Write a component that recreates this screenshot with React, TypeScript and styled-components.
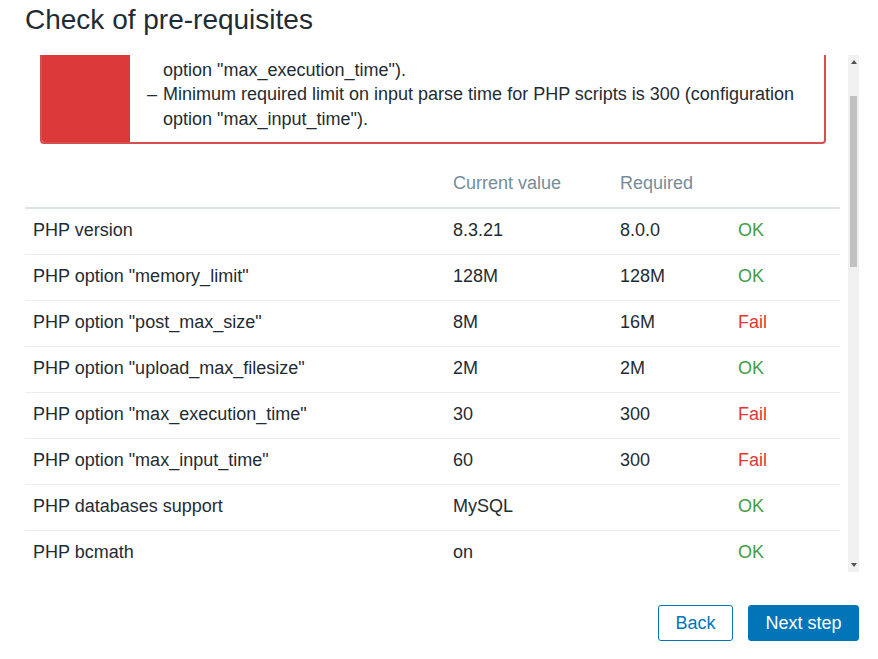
import React, { useEffect, useRef, useState } from "react";
import styled, { createGlobalStyle } from "styled-components";

const Global = createGlobalStyle`
  html, body { margin: 0; padding: 0; background: #fff; }
  body { font-family: "Liberation Sans", Arial, sans-serif; color: #1f2c33; }
  * { box-sizing: border-box; }
`;

const Page = styled.div`
  width: 878px;
  height: 659px;
  padding: 0 19px 0 25px;
  display: flex;
  flex-direction: column;
`;

const Title = styled.h1`
  margin: 0;
  height: 55px;
  padding-top: 1px;
  font-size: 28px;
  line-height: 38px;
  font-weight: normal;
  color: #1f2c33;
`;

const ScrollArea = styled.div`
  display: flex;
  height: 517px;
`;

const Viewport = styled.div`
  position: relative;
  flex: 1;
  min-width: 0;
  overflow-y: scroll;
  padding-right: 8px;
  scrollbar-width: none;
  &::-webkit-scrollbar { display: none; }
`;

const ScrollBar = styled.div`
  width: 11px;
  flex: none;
  background: #f0f0f0;
  display: flex;
  flex-direction: column;
`;

const ScrollArrow = styled.div<{ $dir: "up" | "down" }>`
  height: 14px;
  flex: none;
  display: flex;
  align-items: center;
  justify-content: center;
  &::after {
    content: "";
    width: 0;
    height: 0;
    border-left: 3.5px solid transparent;
    border-right: 3.5px solid transparent;
    ${(p) =>
      p.$dir === "up"
        ? "border-bottom: 4px solid #505050;"
        : "border-top: 4px solid #505050;"}
  }
`;

const ScrollTrack = styled.div`
  position: relative;
  flex: 1;
`;

const ScrollThumb = styled.div`
  position: absolute;
  left: 2px;
  right: 2px;
  background: #c1c1c1;
`;

const MsgBox = styled.div`
  margin: 0 14px 18px 15px;
  display: flex;
  border: 2px solid #d64e4e;
  border-radius: 4px;
  background: #fff;
  overflow: hidden;
`;

const MsgStrip = styled.div`
  width: 88px;
  flex: none;
  background: #dc3a3a;
`;

const MsgList = styled.ul`
  margin: 0;
  padding: 8px 22px 11px 17px;
  list-style: none;
  font-size: 18px;
  line-height: 24.5px;
`;

const MsgItem = styled.li`
  display: flex;
  &::before {
    content: "–";
    flex: none;
    width: 16px;
  }
`;

const Table = styled.table`
  width: 100%;
  border-collapse: collapse;
  font-size: 18px;
`;

const Th = styled.th<{ $w?: number }>`
  width: ${(p) => (p.$w ? `${p.$w}px` : "auto")};
  height: 46px;
  padding: 0 8px 2px;
  text-align: left;
  font-weight: normal;
  color: #768d99;
  border-bottom: 2px solid #dfe4e7;
`;

const Td = styled.td<{ $status?: "ok" | "fail" }>`
  height: 46px;
  padding: 0 8px 1px;
  color: ${(p) => (p.$status === "ok" ? "#429e47" : p.$status === "fail" ? "#e33734" : "#1f2c33")};
`;

const Tr = styled.tr`
  border-bottom: 1px solid #ebeef0;
  &:last-child { border-bottom: 0; }
`;

const Footer = styled.div`
  display: flex;
  justify-content: flex-end;
  gap: 15px;
  padding-top: 33px;
`;

const Button = styled.button<{ $primary?: boolean }>`
  height: 36px;
  padding: 0 16.5px;
  font-family: "Liberation Sans", Arial, sans-serif;
  font-size: 18px;
  border-radius: 3px;
  border: 1px solid #0275b8;
  background: ${(p) => (p.$primary ? "#0275b8" : "#fff")};
  color: ${(p) => (p.$primary ? "#fff" : "#0275b8")};
  cursor: pointer;
`;

const messages = [
  'Minimum required size of PHP post is 16M (configuration option "post_max_size").',
  'Minimum required limit on execution time of PHP scripts is 300 (configuration option "max_execution_time").',
  'Minimum required limit on input parse time for PHP scripts is 300 (configuration option "max_input_time").',
];

type Row = { name: string; current: string; required: string; ok: boolean };

const rows: Row[] = [
  { name: "PHP version", current: "8.3.21", required: "8.0.0", ok: true },
  { name: 'PHP option "memory_limit"', current: "128M", required: "128M", ok: true },
  { name: 'PHP option "post_max_size"', current: "8M", required: "16M", ok: false },
  { name: 'PHP option "upload_max_filesize"', current: "2M", required: "2M", ok: true },
  { name: 'PHP option "max_execution_time"', current: "30", required: "300", ok: false },
  { name: 'PHP option "max_input_time"', current: "60", required: "300", ok: false },
  { name: "PHP databases support", current: "MySQL", required: "", ok: true },
  { name: "PHP bcmath", current: "on", required: "", ok: true },
  { name: "PHP mbstring", current: "on", required: "", ok: true },
  { name: "PHP sockets", current: "on", required: "", ok: true },
  { name: "PHP gd", current: "2.3.3", required: "2.0", ok: true },
  { name: "PHP gd PNG support", current: "on", required: "", ok: true },
  { name: "PHP gd JPEG support", current: "on", required: "", ok: true },
  { name: "PHP gd GIF support", current: "on", required: "", ok: true },
  { name: "PHP gd FreeType support", current: "on", required: "", ok: true },
  { name: "PHP libxml", current: "2.9.14", required: "2.6.15", ok: true },
  { name: "PHP xmlwriter", current: "on", required: "", ok: true },
  { name: "PHP xmlreader", current: "on", required: "", ok: true },
  { name: "PHP LDAP", current: "on", required: "", ok: true },
  { name: "PHP OpenSSL", current: "on", required: "", ok: true },
  { name: "PHP ctype", current: "on", required: "", ok: true },
  { name: "PHP session", current: "on", required: "", ok: true },
  { name: 'PHP option "session.auto_start"', current: "off", required: "off", ok: true },
  { name: "PHP gettext", current: "on", required: "", ok: true },
  { name: 'PHP option "arg_separator.output"', current: "&", required: "&", ok: true },
  { name: "PHP curl", current: "on", required: "", ok: true },
  { name: "System locale", current: "en_US", required: "", ok: true },
];

export default function App() {
  const scrollRef = useRef<HTMLDivElement>(null);
  const tableRef = useRef<HTMLTableElement>(null);
  const trackRef = useRef<HTMLDivElement>(null);
  const [thumb, setThumb] = useState({ top: 0, height: 0 });

  const updateThumb = () => {
    const s = scrollRef.current;
    const tr = trackRef.current;
    if (!s || !tr) return;
    const trackH = tr.clientHeight;
    const ratio = s.clientHeight / s.scrollHeight;
    const h = Math.max(20, trackH * ratio);
    const maxScroll = s.scrollHeight - s.clientHeight;
    const top = maxScroll > 0 ? (s.scrollTop / maxScroll) * (trackH - h) : 0;
    setThumb({ top, height: h });
  };

  useEffect(() => {
    const s = scrollRef.current;
    const t = tableRef.current;
    if (s && t) s.scrollTop = t.offsetTop - 107;
    updateThumb();
  }, []);

  return (
    <>
      <Global />
      <Page>
        <Title>Check of pre-requisites</Title>
        <ScrollArea>
          <Viewport ref={scrollRef} onScroll={updateThumb}>
            <MsgBox>
              <MsgStrip />
              <MsgList>
                {messages.map((m) => (
                  <MsgItem key={m}>{m}</MsgItem>
                ))}
              </MsgList>
            </MsgBox>
            <Table ref={tableRef}>
              <thead>
                <tr>
                  <Th $w={420} />
                  <Th $w={167}>Current value</Th>
                  <Th $w={118}>Required</Th>
                  <Th />
                </tr>
              </thead>
              <tbody>
                {rows.map((r) => (
                  <Tr key={r.name}>
                    <Td>{r.name}</Td>
                    <Td>{r.current}</Td>
                    <Td>{r.required}</Td>
                    <Td $status={r.ok ? "ok" : "fail"}>{r.ok ? "OK" : "Fail"}</Td>
                  </Tr>
                ))}
              </tbody>
            </Table>
          </Viewport>
          <ScrollBar>
            <ScrollArrow $dir="up" />
            <ScrollTrack ref={trackRef}>
              <ScrollThumb style={{ top: thumb.top, height: thumb.height }} />
            </ScrollTrack>
            <ScrollArrow $dir="down" />
          </ScrollBar>
        </ScrollArea>
        <Footer>
          <Button>Back</Button>
          <Button $primary>Next step</Button>
        </Footer>
      </Page>
    </>
  );
}
